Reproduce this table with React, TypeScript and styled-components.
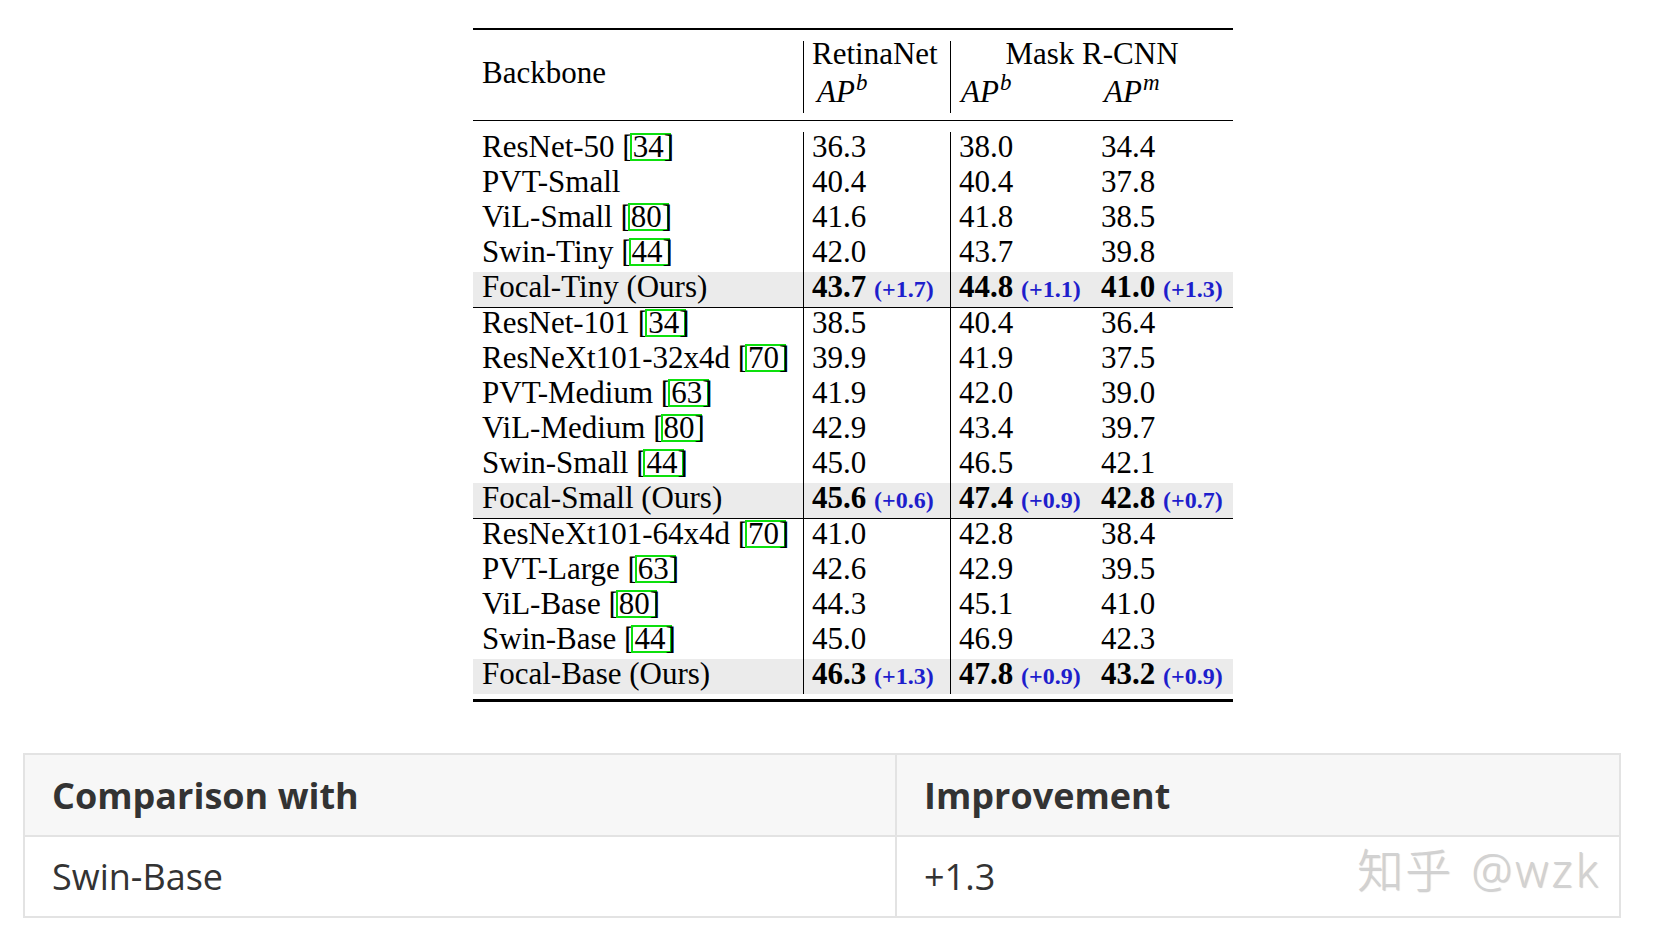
import React from 'react';
import styled, { createGlobalStyle } from 'styled-components';

type Score = { v: string; d?: string };
type Entry = { name: string; cite?: string; ours?: boolean; scores: Score[] };

const groups: Entry[][] = [
  [
    { name: 'ResNet-50', cite: '34', scores: [{ v: '36.3' }, { v: '38.0' }, { v: '34.4' }] },
    { name: 'PVT-Small', scores: [{ v: '40.4' }, { v: '40.4' }, { v: '37.8' }] },
    { name: 'ViL-Small', cite: '80', scores: [{ v: '41.6' }, { v: '41.8' }, { v: '38.5' }] },
    { name: 'Swin-Tiny', cite: '44', scores: [{ v: '42.0' }, { v: '43.7' }, { v: '39.8' }] },
    { name: 'Focal-Tiny (Ours)', ours: true, scores: [{ v: '43.7', d: '+1.7' }, { v: '44.8', d: '+1.1' }, { v: '41.0', d: '+1.3' }] },
  ],
  [
    { name: 'ResNet-101', cite: '34', scores: [{ v: '38.5' }, { v: '40.4' }, { v: '36.4' }] },
    { name: 'ResNeXt101-32x4d', cite: '70', scores: [{ v: '39.9' }, { v: '41.9' }, { v: '37.5' }] },
    { name: 'PVT-Medium', cite: '63', scores: [{ v: '41.9' }, { v: '42.0' }, { v: '39.0' }] },
    { name: 'ViL-Medium', cite: '80', scores: [{ v: '42.9' }, { v: '43.4' }, { v: '39.7' }] },
    { name: 'Swin-Small', cite: '44', scores: [{ v: '45.0' }, { v: '46.5' }, { v: '42.1' }] },
    { name: 'Focal-Small (Ours)', ours: true, scores: [{ v: '45.6', d: '+0.6' }, { v: '47.4', d: '+0.9' }, { v: '42.8', d: '+0.7' }] },
  ],
  [
    { name: 'ResNeXt101-64x4d', cite: '70', scores: [{ v: '41.0' }, { v: '42.8' }, { v: '38.4' }] },
    { name: 'PVT-Large', cite: '63', scores: [{ v: '42.6' }, { v: '42.9' }, { v: '39.5' }] },
    { name: 'ViL-Base', cite: '80', scores: [{ v: '44.3' }, { v: '45.1' }, { v: '41.0' }] },
    { name: 'Swin-Base', cite: '44', scores: [{ v: '45.0' }, { v: '46.9' }, { v: '42.3' }] },
    { name: 'Focal-Base (Ours)', ours: true, scores: [{ v: '46.3', d: '+1.3' }, { v: '47.8', d: '+0.9' }, { v: '43.2', d: '+0.9' }] },
  ],
];

// padding + rule per score column (RetinaNet, Mask AP^b, Mask AP^m)
const scoreCols = [
  { pad: 8, rule: true },
  { pad: 8, rule: true },
  { pad: 9, rule: false },
];

export default function App() {
  return (
    <>
      <GlobalStyle />
      <Page>
        <PaperTable>
          <TopRule />
          <Head>
            <BackboneHead>Backbone</BackboneHead>
            <HeadGroup>
              <HeadTitle>RetinaNet</HeadTitle>
              <HeadMetrics>
                <Metric>AP<Sup>b</Sup></Metric>
              </HeadMetrics>
            </HeadGroup>
            <HeadGroup $wide>
              <HeadTitle $center>Mask R-CNN</HeadTitle>
              <HeadMetrics $split>
                <Metric $pad={10}>AP<Sup>b</Sup></Metric>
                <Metric $pad={12}>AP<Sup>m</Sup></Metric>
              </HeadMetrics>
            </HeadGroup>
          </Head>
          <Body>
            {groups.map((group, gi) => (
              <React.Fragment key={gi}>
                {gi > 0 && <GroupRule />}
                {group.map(row => (
                  <Row key={row.name} $ours={row.ours}>
                    <Cell $pad={9}>
                      {row.name}
                      {row.cite && <> [<Cite>{row.cite}</Cite>]</>}
                    </Cell>
                    {row.scores.map((s, i) => (
                      <Cell key={i} $pad={scoreCols[i].pad} $rule={scoreCols[i].rule}>
                        {s.d ? <><Best>{s.v}</Best> <Delta>({s.d})</Delta></> : s.v}
                      </Cell>
                    ))}
                  </Row>
                ))}
              </React.Fragment>
            ))}
          </Body>
          <BottomRule />
        </PaperTable>

        <Summary>
          <colgroup>
            <col style={{ width: 872 }} />
            <col />
          </colgroup>
          <thead>
            <tr>
              <SummaryHead>Comparison with</SummaryHead>
              <SummaryHead>Improvement</SummaryHead>
            </tr>
          </thead>
          <tbody>
            <tr>
              <SummaryCell>Swin-Base</SummaryCell>
              <SummaryCell>+1.3</SummaryCell>
            </tr>
          </tbody>
        </Summary>

        <Watermark>知乎 <Handle>@wzk</Handle></Watermark>
      </Page>
    </>
  );
}

const GlobalStyle = createGlobalStyle`
  html, body {
    margin: 0;
    padding: 0;
    background: #fff;
  }
`;

const Page = styled.div`
  position: relative;
  width: 1654px;
  height: 934px;
  padding-top: 28px;
  box-sizing: border-box;
  overflow: hidden;
  background: #fff;
`;

const PaperTable = styled.div`
  width: 760px;
  margin-left: 473px;
  font-family: "Liberation Serif", "Times New Roman", serif;
  font-size: 31px;
  color: #000;
`;

const TopRule = styled.div`
  height: 2px;
  background: #000;
`;

const BottomRule = styled.div`
  height: 3px;
  background: #000;
`;

const Head = styled.div`
  display: flex;
  padding: 11px 0 7px;
  border-bottom: 1px solid #000;
`;

const BackboneHead = styled.div`
  width: 330px;
  height: 72px;
  box-sizing: border-box;
  padding: 0 0 8px 9px;
  display: flex;
  align-items: center;
`;

const HeadGroup = styled.div<{ $wide?: boolean }>`
  width: ${p => (p.$wide ? 283 : 147)}px;
  height: 72px;
  box-sizing: border-box;
  border-left: 1px solid #000;
  padding-left: ${p => (p.$wide ? 0 : 8)}px;
`;

const HeadTitle = styled.div<{ $center?: boolean }>`
  height: 36px;
  line-height: 26px;
  text-align: ${p => (p.$center ? 'center' : 'left')};
  white-space: nowrap;
`;

const HeadMetrics = styled.div<{ $split?: boolean }>`
  height: 36px;
  line-height: 30px;
  display: grid;
  grid-template-columns: ${p => (p.$split ? '141px 141px' : '1fr')};
`;

const Metric = styled.span<{ $pad?: number }>`
  font-style: italic;
  padding-left: ${p => p.$pad ?? 5}px;
`;

const Sup = styled.sup`
  font-size: 23px;
  line-height: 0;
  vertical-align: 12px;
  margin-left: 1px;
`;

const Body = styled.div`
  padding: 11px 0 5px;
`;

const GroupRule = styled.div`
  height: 1px;
  background: #000;
`;

const Row = styled.div<{ $ours?: boolean }>`
  display: grid;
  grid-template-columns: 330px 147px 142px 141px;
  height: 35px;
  line-height: 29px;
  background: ${p => (p.$ours ? '#ebebeb' : 'transparent')};
`;

const Cell = styled.div<{ $pad: number; $rule?: boolean }>`
  padding-left: ${p => p.$pad}px;
  border-left: ${p => (p.$rule ? '1px solid #000' : 'none')};
  white-space: nowrap;
`;

const Cite = styled.span`
  display: inline-block;
  line-height: 22px;
  padding-right: 4px;
  margin-right: -4px;
  outline: 2px solid #0de00d;
  outline-offset: 1px;
`;

const Best = styled.b`
  font-weight: 700;
`;

const Delta = styled.span`
  font-weight: 700;
  font-size: 24px;
  color: #1e1ecc;
`;

const Summary = styled.table`
  margin: 51px 0 0 23px;
  width: 1598px;
  table-layout: fixed;
  border-collapse: collapse;
  font-family: "Open Sans", "Noto Sans", sans-serif;
  font-size: 36px;
  color: #333;
`;

const SummaryHead = styled.th`
  height: 80px;
  padding: 0 27px;
  text-align: left;
  font-weight: 700;
  background: #f7f7f7;
  border: 2px solid #e3e3e3;
`;

const SummaryCell = styled.td`
  height: 79px;
  padding: 0 27px;
  font-weight: 400;
  border: 2px solid #e3e3e3;
`;

const Watermark = styled.div`
  position: absolute;
  left: 1357px;
  top: 842px;
  font-family: "Noto Sans CJK SC", "Noto Sans", sans-serif;
  font-size: 46px;
  font-weight: 300;
  line-height: 50px;
  letter-spacing: 2px;
  color: #d2d2d2;
  text-shadow: 1px 1px 1px rgba(0, 0, 0, 0.2);
  white-space: nowrap;
`;

const Handle = styled.span`
  font-family: "Open Sans", "Noto Sans", sans-serif;
  letter-spacing: 3px;
  margin-left: 6px;
`;
